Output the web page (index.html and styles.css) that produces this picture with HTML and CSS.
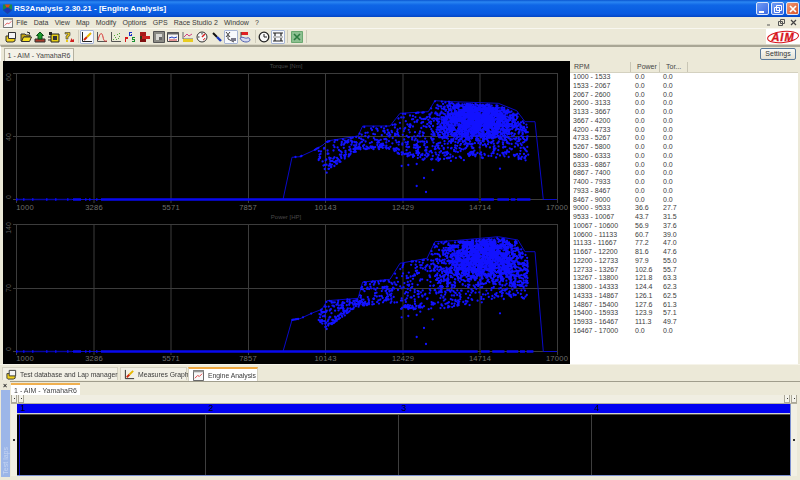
FILE: index.html
```html
<!DOCTYPE html>
<html lang="en">
<head>
<meta charset="utf-8">
<title>RS2Analysis 2.30.21 - [Engine Analysis]</title>
<link rel="stylesheet" href="styles.css">
</head>
<body>
<svg class="defs" aria-hidden="true">
  <symbol id="i-db" viewBox="0 0 12 12"><path d="M1 5h7l2 1v4l-2 1H2L1 10z" fill="#f2d21a" stroke="#333"/><path d="M3.500 1.500h7v6h-7z" fill="#f4f4f4" stroke="#333"/></symbol>
  <symbol id="i-open" viewBox="0 0 12 12"><path d="M1 3h4l1 1h4v2H4L2 10H1z" fill="#c8a810" stroke="#333"/><path d="M3.500 6H11.500L9.500 10.500H1.500z" fill="#f7e022" stroke="#333"/><path d="M7 1l3 1-1 1" fill="none" stroke="#222"/></symbol>
  <symbol id="i-up" viewBox="0 0 12 12"><path d="M1 8h10v3H1z" fill="#a83a28" stroke="#333"/><path d="M6 1l3.500 3.500H8V8H4V4.500H2.500z" fill="#1c9a2c" stroke="#0d4d16"/></symbol>
  <symbol id="i-chip" viewBox="0 0 12 12"><path d="M3 3h8v8H3z" fill="#e8d018" stroke="#222"/><path d="M5 5h4v4H5z" fill="#333"/><path d="M1 1h3v3H1z" fill="#222"/><path d="M0 6h3M0 9h3" stroke="#222"/></symbol>
  <symbol id="i-help" viewBox="0 0 12 12"><path d="M2 1.500h5v3L5 6v2H3V5l2-1.500V3H2z" fill="#e8c818" stroke="#333" stroke-width=".6"/><path d="M3 9h2v2H3z" fill="#e8c818"/><path d="M7 11l1.500-4 1 2 1.500-1v3z" fill="#d02020"/></symbol>
  <symbol id="i-pen" viewBox="0 0 12 12"><path d="M1.500 1v9.500H11" fill="none" stroke="#222"/><path d="M3 9l3-3" stroke="#d02a10" stroke-width="2"/><path d="M6 6l4-4" stroke="#e8b800" stroke-width="2"/></symbol>
  <symbol id="i-curve" viewBox="0 0 12 12"><path d="M1.500 1v9.500H11" fill="none" stroke="#555"/><path d="M2 9C4 1 6 1 7 6s2 4 4 4" fill="none" stroke="#d83030"/></symbol>
  <symbol id="i-scatter" viewBox="0 0 12 12"><path d="M1.500 1v9.500H11" fill="none" stroke="#555"/><path d="M3 8h1v1H3zM5 6h1v1H5zM7 3h1v1H7zM9 2h1v1H9zM4 4h1v1H4zM8 7h1v1H8zM6 8h1v1H6zM9 5h1v1H9z" fill="#50a838"/></symbol>
  <symbol id="i-pgs" viewBox="0 0 12 12"><path d="M1 6h3v2H2v3H1z" fill="#d81818"/><path d="M5 1h3v1H6v2h1V3h1v2H5z" fill="#1830c8"/><path d="M8 6h3v1H9v1h2v3H8v-1h2V9H8z" fill="#189030"/></symbol>
  <symbol id="i-blocks" viewBox="0 0 12 12"><path d="M1 1h6v4H1z" fill="#a81818"/><path d="M3 5h8v3H3z" fill="#c82020"/><path d="M1 8h6v3H1z" fill="#801010"/><path d="M1 5h2v3H1z" fill="#331"/></symbol>
  <symbol id="i-box" viewBox="0 0 12 12"><path d="M.500.500h11v11H.500z" fill="#8a8a84" stroke="#555"/><path d="M3 3h6v6H3z" fill="#d8d8d4"/><path d="M6 6h3v3H6z" fill="#666"/></symbol>
  <symbol id="i-win" viewBox="0 0 12 12"><path d="M.500 1.500h11v9H.500z" fill="#f4f4f4" stroke="#444"/><path d="M.500 1.500h11v2H.500z" fill="#666"/><path d="M2 7l3-1 2 1 3-1" fill="none" stroke="#2040c0"/><path d="M2 9h8" stroke="#d03030"/></symbol>
  <symbol id="i-hill" viewBox="0 0 12 12"><path d="M1 1v7h10" fill="none" stroke="#666"/><path d="M2 6l3-3 2 2 3-2" fill="none" stroke="#d04080"/><path d="M1 8h10v3H1z" fill="#e8cc20"/></symbol>
  <symbol id="i-gauge" viewBox="0 0 12 12"><circle cx="6" cy="6" r="5" fill="#f8f8f8" stroke="#333"/><path d="M6 6l3-3" stroke="#d82020" stroke-width="1.400"/><path d="M2 6h1.500M6 2v1.500" stroke="#333"/><path d="M7 9a3 3 0 0 0 2-2" stroke="#d82020" fill="none"/></symbol>
  <symbol id="i-driver" viewBox="0 0 12 12"><path d="M2 2l4 4" stroke="#111" stroke-width="2"/><path d="M6 6l4 4" stroke="#1838c0" stroke-width="2.400"/></symbol>
  <symbol id="i-xy" viewBox="0 0 12 12"><path d="M1 1l4 5M5 1L1 6M3 4v4l6 3" fill="none" stroke="#444" stroke-width="1"/><path d="M6 7h5v3H6z" fill="#778"/></symbol>
  <symbol id="i-flag" viewBox="0 0 12 12"><path d="M2 1h7v3H2z" fill="#e02020"/><path d="M2 1v5" stroke="#444"/><path d="M1 7c3-2 5 1 7 0s3 1 3 2-2 2-4 2-5-1-6-4z" fill="#d8dcf0" stroke="#5060b0"/></symbol>
  <symbol id="i-clock" viewBox="0 0 12 12"><circle cx="6" cy="6" r="4.800" fill="#f8f8f8" stroke="#222" stroke-width="1.300"/><path d="M6 3v3h3" fill="none" stroke="#222"/></symbol>
  <symbol id="i-beam" viewBox="0 0 12 12"><path d="M1 2h10M1 10h10M3 2v3M9 2v3M3 7v3M9 7v3" stroke="#222" stroke-width="1.200"/><path d="M1 6h10" stroke="#888"/></symbol>
  <symbol id="i-xl" viewBox="0 0 12 12"><path d="M.500.500h11v11H.500z" fill="#8cc090" stroke="#6aa870"/><path d="M3 3l6 6M9 3L3 9" stroke="#2c7a40" stroke-width="1.600"/></symbol>
  <symbol id="i-graph" viewBox="0 0 12 12"><path d="M.500.500h11v11H.500z" fill="#f8f8f8" stroke="#555"/><path d="M.500.500h11v2H.500z" fill="#999"/><path d="M2 9l3-3 2 1 3-3" fill="none" stroke="#e04040"/></symbol>
</svg>

<div class="window">
  <header class="titlebar">
    <svg class="app-icon" viewBox="0 0 12 12" aria-hidden="true"><path d="M1 1h10v6L6 11.500 1 7z" fill="#1a8a4a"/><path d="M3 1h6L6 6z" fill="#e04818"/><path d="M1 7l5-3 5 3-5 4.500z" fill="#1838b8"/></svg>
    <span class="title-text">RS2Analysis 2.30.21 - [Engine Analysis]</span>
    <div class="win-buttons">
      <span class="win-btn"><i class="g-min"></i></span>
      <span class="win-btn"><svg viewBox="0 0 10 10"><path d="M3.500 1.500h5v5h-5zM1.500 3.500h5v5h-5z" fill="none" stroke="#fff"/></svg></span>
      <span class="win-btn win-close"><svg viewBox="0 0 10 10"><path d="M2 2l6 6M8 2L2 8" stroke="#fff" stroke-width="1.700"/></svg></span>
    </div>
  </header>

  <nav class="menubar">
    <svg class="menu-icon"><use href="#i-graph"/></svg>
    <span>File</span><span>Data</span><span>View</span><span>Map</span><span>Modify</span><span>Options</span><span>GPS</span><span>Race Studio 2</span><span>Window</span><span>?</span>
    <div class="mdi-buttons">
      <svg viewBox="0 0 9 9"><path d="M2 7h3" stroke="#555"/></svg>
      <svg viewBox="0 0 9 9"><path d="M3.500 1.500h4v4h-4zM1.500 3.500h4v4h-4z" fill="#ece9d8" stroke="#555"/></svg>
      <svg viewBox="0 0 9 9"><path d="M2 2l5 5M7 2L2 7" stroke="#444" stroke-width="1.200"/></svg>
    </div>
  </nav>

  <div class="toolbar">
    <div class="tool-group">
      <span class="tool"><svg><use href="#i-db"/></svg></span>
      <span class="tool"><svg><use href="#i-open"/></svg></span>
      <span class="tool"><svg><use href="#i-up"/></svg></span>
      <span class="tool"><svg><use href="#i-chip"/></svg></span>
      <span class="tool"><svg><use href="#i-help"/></svg></span>
    </div>
    <div class="tool-group">
      <span class="tool on"><svg><use href="#i-pen"/></svg></span>
      <span class="tool"><svg><use href="#i-curve"/></svg></span>
      <span class="tool"><svg><use href="#i-scatter"/></svg></span>
      <span class="tool"><svg><use href="#i-pgs"/></svg></span>
      <span class="tool"><svg><use href="#i-blocks"/></svg></span>
      <span class="tool"><svg><use href="#i-box"/></svg></span>
      <span class="tool"><svg><use href="#i-win"/></svg></span>
      <span class="tool"><svg><use href="#i-hill"/></svg></span>
      <span class="tool"><svg><use href="#i-gauge"/></svg></span>
      <span class="tool"><svg><use href="#i-driver"/></svg></span>
      <span class="tool on"><svg><use href="#i-xy"/></svg></span>
      <span class="tool"><svg><use href="#i-flag"/></svg></span>
    </div>
    <div class="tool-group">
      <span class="tool"><svg><use href="#i-clock"/></svg></span>
      <span class="tool on"><svg><use href="#i-beam"/></svg></span>
    </div>
    <div class="tool-group">
      <span class="tool"><svg><use href="#i-xl"/></svg></span>
    </div>
    <div class="logo">
      <svg class="logo-ring" viewBox="0 0 34 14" aria-hidden="true"><ellipse cx="17" cy="7.500" rx="15.500" ry="5.500" fill="none" stroke="#d8141c" stroke-width="1" transform="rotate(-6 17 7)"/></svg>
      <span class="logo-text">AIM</span>
    </div>
  </div>

  <div class="doc-tabs">
    <span class="doc-tab">1 - AIM - YamahaR6</span>
    <button class="settings">Settings</button>
  </div>

  <div class="workspace">
    <svg class="chart" viewBox="3 61 567 303" aria-label="Engine analysis charts">
      <g class="grid">
        <path d="M13 73.500H557.500M13 136.500H557.500M13 199.500H557.500M16.500 73V203M94 73V203M171 73V203M248.500 73V203M325.500 73V203M403 73V203M480 73V203M557.500 73V203"/>
        <path d="M13 224.500H557.500M13 288.500H557.500M13 351.500H557.500M16.500 224V355M94 224V355M171 224V355M248.500 224V355M325.500 224V355M403 224V355M480 224V355M557.500 224V355"/>
      </g>
      <text class="chart-title" x="286" y="68">Torque [Nm]</text>
      <text class="chart-title" x="286" y="219">Power [HP]</text>
      <text class="ax-y" transform="translate(10.500 77) rotate(-90)">60</text>
      <text class="ax-y" transform="translate(10.500 137) rotate(-90)">40</text>
      <text class="ax-y" transform="translate(10.500 197) rotate(-90)">0</text>
      <text class="ax-y" transform="translate(10.500 228) rotate(-90)">140</text>
      <text class="ax-y" transform="translate(10.500 288) rotate(-90)">70</text>
      <text class="ax-y" transform="translate(10.500 349) rotate(-90)">0</text>
      <g class="ax-x">
        <text x="25" y="210">1000</text><text x="94" y="210">3286</text><text x="171" y="210">5571</text><text x="248" y="210">7857</text><text x="325.500" y="210">10143</text><text x="403" y="210">12429</text><text x="480" y="210">14714</text><text x="557" y="210">17000</text>
        <text x="25" y="361">1000</text><text x="94" y="361">3286</text><text x="171" y="361">5571</text><text x="248" y="361">7857</text><text x="325.500" y="361">10143</text><text x="403" y="361">12429</text><text x="480" y="361">14714</text><text x="557" y="361">17000</text>
      </g>
      <path class="envelope" id="env-torque" d="M16 199.500H283L292 157.300 300 156.700 313 150.700 323 145 327 141 358 136 362.700 126 390 126 400 113.300 428.300 111.700 435 100.700 453.300 101.700 498.300 103.300 516.700 110.700 525 121.700 535 121.700 543.300 199.500H557"/>
      <path class="envelope" id="env-power" d="M16 351.500H283L292 320 300 318.700 313 312.700 322 309.300 327 300.700 358 298.300 362.700 282 390 279.300 400 263.300 427 258.300 435 241.700 453.300 240.700 498.300 236.700 518 240 525 251.700 535 251.700 543.300 351.500H557"/>
      <path class="dots" id="dots-torque"/>
      <path class="dots" id="dots-power"/>
      <path class="baseline" d="M16 199.500H72M16 351.500H72"/>
      <path class="base-thick" id="base-torque"/>
      <path class="base-thick" id="base-power"/>
    </svg>

    <div class="table">
      <div class="thead"><span>RPM</span><span>Power</span><span>Tor...</span><i></i></div>
      <div class="row"><span>1000 - 1533</span><span>0.0</span><span>0.0</span></div>
      <div class="row"><span>1533 - 2067</span><span>0.0</span><span>0.0</span></div>
      <div class="row"><span>2067 - 2600</span><span>0.0</span><span>0.0</span></div>
      <div class="row"><span>2600 - 3133</span><span>0.0</span><span>0.0</span></div>
      <div class="row"><span>3133 - 3667</span><span>0.0</span><span>0.0</span></div>
      <div class="row"><span>3667 - 4200</span><span>0.0</span><span>0.0</span></div>
      <div class="row"><span>4200 - 4733</span><span>0.0</span><span>0.0</span></div>
      <div class="row"><span>4733 - 5267</span><span>0.0</span><span>0.0</span></div>
      <div class="row"><span>5267 - 5800</span><span>0.0</span><span>0.0</span></div>
      <div class="row"><span>5800 - 6333</span><span>0.0</span><span>0.0</span></div>
      <div class="row"><span>6333 - 6867</span><span>0.0</span><span>0.0</span></div>
      <div class="row"><span>6867 - 7400</span><span>0.0</span><span>0.0</span></div>
      <div class="row"><span>7400 - 7933</span><span>0.0</span><span>0.0</span></div>
      <div class="row"><span>7933 - 8467</span><span>0.0</span><span>0.0</span></div>
      <div class="row"><span>8467 - 9000</span><span>0.0</span><span>0.0</span></div>
      <div class="row"><span>9000 - 9533</span><span>36.6</span><span>27.7</span></div>
      <div class="row"><span>9533 - 10067</span><span>43.7</span><span>31.5</span></div>
      <div class="row"><span>10067 - 10600</span><span>56.9</span><span>37.6</span></div>
      <div class="row"><span>10600 - 11133</span><span>60.7</span><span>39.0</span></div>
      <div class="row"><span>11133 - 11667</span><span>77.2</span><span>47.0</span></div>
      <div class="row"><span>11667 - 12200</span><span>81.6</span><span>47.6</span></div>
      <div class="row"><span>12200 - 12733</span><span>97.9</span><span>55.0</span></div>
      <div class="row"><span>12733 - 13267</span><span>102.6</span><span>55.7</span></div>
      <div class="row"><span>13267 - 13800</span><span>121.8</span><span>63.3</span></div>
      <div class="row"><span>13800 - 14333</span><span>124.4</span><span>62.3</span></div>
      <div class="row"><span>14333 - 14867</span><span>126.1</span><span>62.5</span></div>
      <div class="row"><span>14867 - 15400</span><span>127.6</span><span>61.3</span></div>
      <div class="row"><span>15400 - 15933</span><span>123.9</span><span>57.1</span></div>
      <div class="row"><span>15933 - 16467</span><span>111.3</span><span>49.7</span></div>
      <div class="row"><span>16467 - 17000</span><span>0.0</span><span>0.0</span></div>
    </div>
  </div>

  <div class="sheet-tabs">
    <span class="sheet-tab sheet-db"><svg><use href="#i-db"/></svg>Test database and Lap manager</span>
    <span class="sheet-tab sheet-graph"><svg><use href="#i-pen"/></svg>Measures Graph</span>
    <span class="sheet-tab active"><svg><use href="#i-graph"/></svg>Engine Analysis</span>
  </div>

  <div class="laps">
    <aside class="side">
      <span class="side-close">×</span>
      <div class="side-strip"><span>Test laps</span></div>
    </aside>
    <section class="lap-main">
      <div class="lap-tabs"><span class="lap-tab">1 - AIM - YamahaR6</span></div>
      <div class="scroll-row">
        <span class="sbtn"></span><span class="sbtn"></span>
        <span class="scroll-fill"></span>
        <span class="sbtn"></span><span class="sbtn"></span>
      </div>
      <div class="lap-view">
        <div class="vtrack"><span class="sdot"></span></div>
        <div class="lap-center">
          <div class="ruler"><span>1</span><span>2</span><span>3</span><span>4</span></div>
          <div class="canvas"><i></i><i></i><i></i><i></i></div>
        </div>
        <div class="vtrack"><span class="sdot"></span></div>
      </div>
    </section>
  </div>
</div>
<script src="chart.js"></script>
</body>
</html>
```

FILE: styles.css
```css
* { box-sizing: border-box; }
html, body { margin: 0; padding: 0; }
body { width: 800px; height: 480px; overflow: hidden; background: #ece9d8; font-family: "Liberation Sans", Arial, sans-serif; font-size: 7px; color: #3c3c3c; }
.defs { width: 0; height: 0; position: absolute; }
.window { width: 800px; height: 480px; display: flex; flex-direction: column; filter: blur(.3px); }

.titlebar { height: 17px; flex: none; display: flex; align-items: center; padding: 0 1px 0 2px; background: linear-gradient(180deg, #0a55d0 0, #2a86f2 2px, #0f66e6 5px, #0a5ee2 11px, #0a5ae0 14px, #0445c4 100%); }
.app-icon { width: 11px; height: 12px; flex: none; }
.title-text { margin-left: 1px; color: #fff; font-weight: bold; font-size: 8px; letter-spacing: .02px; white-space: nowrap; }
.win-buttons { margin-left: auto; display: flex; gap: 2px; }
.win-btn { width: 13px; height: 13px; border: 1px solid #dce6fa; border-radius: 2px; background: linear-gradient(135deg, #6f9cf4, #3a68e4); display: flex; align-items: center; justify-content: center; }
.win-btn svg { width: 10px; height: 10px; }
.win-close { background: linear-gradient(135deg, #f09a78, #dc5428); }
.g-min { width: 5px; height: 2px; background: #fff; margin-top: 6px; margin-right: 2px; }

.menubar { height: 12px; flex: none; display: flex; align-items: center; gap: 6.200px; padding-left: 3px; background: #ece9d8; border-bottom: 1px solid #f8f7f0; color: #3a3a3a; white-space: nowrap; }
.menu-icon { width: 10px; height: 10px; margin-right: -3px; flex: none; }
.mdi-buttons { margin-left: auto; display: flex; gap: 3px; padding-right: 2px; }
.mdi-buttons svg { width: 9px; height: 9px; }

.toolbar { height: 16px; flex: none; display: flex; align-items: center; padding-left: 4px; background: #ece9d8; border-bottom: 1px solid #d8d5c4; }
.tool-group { display: flex; padding-right: 2px; margin-right: 1px; border-right: 1px solid #cfccbb; height: 13px; align-items: center; }
.tool-group:last-of-type { border-right: 0; }
.tool { width: 14.400px; height: 14px; display: flex; align-items: center; justify-content: center; flex: none; }
.tool svg { width: 12px; height: 12px; }
.tool.on { background: #f8f9fd; outline: 1px solid #a8b6d4; outline-offset: -1px; border-radius: 1px; }
.logo { margin-left: auto; width: 34px; height: 15px; background: #fff; position: relative; display: flex; align-items: center; justify-content: center; flex: none; }
.logo-ring { position: absolute; inset: 0; width: 34px; height: 15px; }
.logo-text { position: relative; color: #d8141c; font-weight: bold; font-style: italic; font-size: 11px; letter-spacing: 1px; line-height: 14px; -webkit-text-stroke: .3px #d8141c; }

.doc-tabs { height: 16px; flex: none; display: flex; align-items: flex-end; padding: 0 4px 0 3px; background: #ece9d8; border-left: 1px solid #fff; border-top: 2px solid #a9a695; }
.doc-tab { height: 13px; width: 70px; display: flex; align-items: center; justify-content: center; background: #f4f2e8; border: 1px solid #b4b1a0; border-bottom: 0; color: #444; }
.settings { margin: 0 0 1px auto; width: 36px; height: 12px; padding: 0; font: inherit; color: #333; background: linear-gradient(#fafaf6, #e4e1d4); border: 1px solid #5a7a9c; border-radius: 2px; align-self: center; }

.workspace { height: 303px; flex: none; display: flex; padding-left: 3px; padding-right: 2px; background: #ece9d8; }
.chart { width: 567px; height: 303px; flex: none; background: #000; display: block; }
.grid path { fill: none; stroke: #3c3c3c; stroke-width: 1; }
.chart-title { fill: #4a4a4a; font-size: 6px; text-anchor: middle; }
.ax-y { fill: #5a5a5a; font-size: 7px; text-anchor: middle; }
.ax-x text { fill: #6e6e6e; font-size: 7.600px; text-anchor: middle; letter-spacing: .2px; }
.envelope { fill: none; stroke: #0a0ac8; stroke-width: 1; }
.dots { fill: none; stroke: #1212ff; stroke-width: 2.300; stroke-linecap: round; }
.baseline { stroke: #0606a0; stroke-width: 1.500; fill: none; }
.base-thick { fill: none; stroke: #0808f0; stroke-width: 2.300; }

.table { flex: 1; background: #fff; display: flex; flex-direction: column; }
.thead { height: 12px; flex: none; display: grid; grid-template-columns: 61px 29px 28px 1fr; background: #ece9d8; border-bottom: 1px solid #d4d1c0; align-items: center; }
.thead span { height: 10px; line-height: 10px; padding-left: 4px; border-right: 1px solid #c9c6b5; color: #444; }
.thead span + span { padding-left: 6px; }
.thead i { display: block; }
.row { height: 8.750px; line-height: 8.750px; flex: none; display: grid; grid-template-columns: 62px 28px 1fr; padding-left: 3px; }

.sheet-tabs { height: 17px; flex: none; display: flex; align-items: flex-start; padding: 2px 0 0 2px; gap: 2px; background: #ece9d8; border-top: 1px solid #f6f4ea; font-size: 6.800px; }
.sheet-tab { height: 13px; display: flex; align-items: center; gap: 3px; padding-left: 3px; background: #f2f0e6; border: 1px solid #d4d1c2; border-bottom: 0; color: #3a3a3a; white-space: nowrap; }
.sheet-tab svg { width: 11px; height: 11px; flex: none; }
.sheet-db { width: 116px; }
.sheet-graph { width: 67px; margin-right: -1px; }
.sheet-tab.active { width: 70px; height: 14px; background: #fff; border-top: 2px solid #f0a840; padding-left: 4px; gap: 4px; }

.laps { flex: 1; min-height: 0; display: flex; }
.side { width: 10px; flex: none; display: flex; flex-direction: column; padding-top: 1px; }
.side-close { height: 8px; line-height: 8px; text-align: center; color: #222; font-weight: bold; font-size: 7px; }
.side-strip { flex: 1; margin: 0 0 3px 1px; background: #9cb6e8; display: flex; align-items: flex-end; justify-content: center; }
.side-strip span { writing-mode: vertical-rl; transform: rotate(180deg); color: #c4d4f2; padding-top: 2px; white-space: nowrap; }

.lap-main { flex: 1; display: flex; flex-direction: column; border-top: 1px solid #a09d8c; padding: 1px 3px 4px 1px; }
.lap-tabs { height: 12px; flex: none; display: flex; align-items: flex-end; }
.lap-tab { width: 69px; height: 12px; display: flex; align-items: center; justify-content: center; background: #fff; border-top: 2px solid #f0b050; color: #444; }
.scroll-row { height: 9px; flex: none; display: flex; gap: 1px; border-bottom: 1px solid #b4b1a0; background: #f0eee2; }
.sbtn { width: 6px; height: 8px; background: #f4f3ea; border: 1px solid #aca999; border-top: 0; position: relative; }
.sbtn::after { content: ""; position: absolute; left: 1.500px; top: 3px; width: 1px; height: 1px; background: #333; }
.scroll-fill { flex: 1; }
.lap-view { flex: 1; min-height: 0; display: flex; }
.vtrack { width: 6px; flex: none; background: #f2f0e4; display: flex; align-items: center; justify-content: center; }
.sdot { width: 1.500px; height: 1.500px; background: #333; }
.lap-center { flex: 1; display: flex; flex-direction: column; border-bottom: 1px solid #7c90d0; border-right: 1px solid #7c90d0; }
.ruler { height: 10px; flex: none; display: grid; grid-template-columns: 188px 193px 193px 1fr; background: #0000f0; border-bottom: 1px solid #cfd0d8; color: #000; font-size: 9px; line-height: 9px; padding-left: 2px; }
.ruler span { padding-left: 1px; }
.canvas { flex: 1; min-height: 0; display: grid; grid-template-columns: 187px 193px 193px 1fr; background: #000; padding-left: 2px; border-top: 1px solid #55523f; }
.canvas i { display: block; border-right: 1px solid #3e3e3e; }
.canvas i:first-child { border-left: 1px solid #0808c0; }
.canvas i:last-child { border-right: 0; }
```

FILE: chart.js
```js
(function () {
  var seed = 20417;
  function rnd() {
    seed |= 0; seed = seed + 0x6D2B79F5 | 0;
    var t = Math.imul(seed ^ seed >>> 15, 1 | seed);
    t = t + Math.imul(t ^ t >>> 7, 61 | t) ^ t;
    return ((t ^ t >>> 14) >>> 0) / 4294967296;
  }
  function gauss() { return (rnd() + rnd() + rnd() + rnd() - 2) / 0.58; }
  function lerp(pts, x) {
    if (x <= pts[0][0]) return pts[0][1];
    for (var i = 1; i < pts.length; i++) {
      if (x <= pts[i][0]) {
        var a = pts[i - 1], b = pts[i];
        return a[1] + (b[1] - a[1]) * (x - a[0]) / (b[0] - a[0]);
      }
    }
    return pts[pts.length - 1][1];
  }
  function build(cfg) {
    var out = [];
    function add(x, y) { out.push("M" + (280 + x / 3).toFixed(1) + " " + (cfg.oy + y / 3).toFixed(1) + "h0"); }
    var i, x, y, top, low, dx;
    for (i = 0; i < 2000; i++) {
      x = cfg.blob[0] + gauss() * cfg.blob[2];
      dx = (x - cfg.blob[0]) / 100;
      y = cfg.blob[1] + dx * dx * cfg.curve + gauss() * cfg.blob[3];
      if (x < 450 || x > 745) continue;
      if (y < lerp(cfg.upper, x) + 4 || y > lerp(cfg.lower, x) - rnd() * 30) continue;
      add(x, y);
    }
    for (i = 0; i < 720; i++) {
      x = 115 + rnd() * 630;
      if (rnd() < 0.3) x = 380 + rnd() * 365;
      top = lerp(cfg.upper, x) + 6;
      low = lerp(cfg.lower, x);
      if (low <= top) continue;
      add(x, top + Math.pow(rnd(), 1.05) * (low - top));
    }
    for (i = 0; i < 90; i++) {
      x = 120 + rnd() * 280;
      add(x, lerp(cfg.lower, x) - rnd() * 14);
    }
    for (i = 0; i < 60; i++) {
      x = 400 + rnd() * 340;
      add(x, lerp(cfg.lower, x) - rnd() * 22 + rnd() * 8);
    }
    for (i = 0; i < 30; i++) {
      x = 120 + rnd() * 390;
      add(x, lerp(cfg.upper, x) + 1 + rnd() * 3);
    }
    for (i = 0; i < 8; i++) {
      x = 35 + rnd() * 95;
      add(x, lerp(cfg.upper, x));
    }
    cfg.extra.forEach(function (p) { add(p[0], p[1]); });
    document.getElementById(cfg.id).setAttribute("d", out.join(""));
  }
  function baseline(id, y) {
    var d = "", xs = [16, 23, 32, 46, 55, 67, 85, 89, 96];
    xs.forEach(function (x) { d += "M" + x + " " + y + "h1.500"; });
    d += "M73 " + y + "H81M101 " + y + "H470";
    var x = 470;
    while (x < 530) {
      var len = 4 + rnd() * 10;
      d += "M" + x.toFixed(1) + " " + y + "h" + len.toFixed(1);
      x += len + 1 + rnd() * 3;
    }
    document.getElementById(id).setAttribute("d", d);
  }
  build({
    id: "dots-torque", oy: 60, blob: [590, 178, 62, 34], curve: 18,
    upper: [[35, 292], [60, 290], [100, 272], [130, 255], [140, 243], [235, 228], [248, 198], [330, 198], [360, 160], [445, 155], [465, 122], [520, 125], [655, 130], [710, 152], [735, 185], [748, 190]],
    lower: [[115, 302], [140, 335], [190, 300], [240, 268], [335, 268], [365, 288], [450, 300], [600, 292], [700, 285], [740, 300]],
    extra: [[140, 338], [365, 318], [385, 315], [410, 312], [432, 354], [410, 378], [438, 396], [458, 330], [660, 326], [116, 300], [120, 292]]
  });
  build({
    id: "dots-power", oy: 220, blob: [610, 105, 64, 38], curve: 28,
    upper: [[35, 300], [60, 296], [100, 278], [125, 268], [140, 242], [235, 235], [248, 186], [330, 178], [360, 130], [440, 115], [465, 65], [520, 62], [655, 50], [715, 60], [735, 95], [748, 115]],
    lower: [[115, 302], [140, 325], [200, 282], [240, 258], [335, 248], [365, 268], [450, 270], [600, 245], [700, 225], [735, 240]],
    extra: [[140, 327], [365, 292], [385, 288], [410, 285], [432, 324], [410, 351], [438, 372], [458, 298], [660, 280], [116, 300], [120, 292]]
  });
  baseline("base-torque", 199.5);
  baseline("base-power", 351.5);
})();
```
